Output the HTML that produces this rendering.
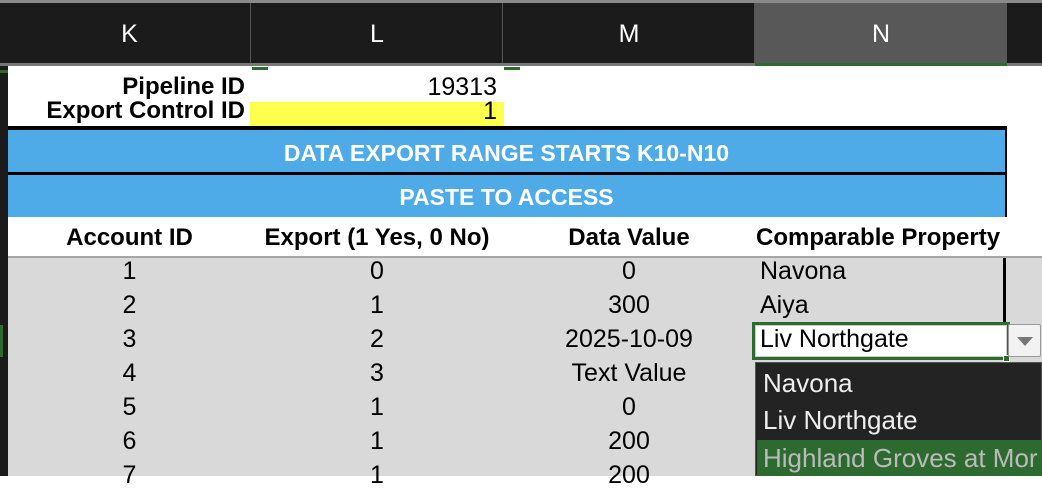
<!DOCTYPE html>
<html><head><meta charset="utf-8"><style>
*{margin:0;padding:0;box-sizing:border-box}
body{width:1042px;height:476px;overflow:hidden;background:#fff;position:relative;font-family:"Liberation Sans",sans-serif}
.a{position:absolute}
.t{position:absolute;font-size:25px;color:#000;white-space:nowrap;line-height:28px}
.c{text-align:center}
.b{font-weight:bold;font-size:24px}
</style></head><body>
<!-- header -->
<div class="a" style="left:0;top:0;width:1042px;height:66px;background:#1b1b1b;border-top:3px solid #8a8a8a"></div>
<div class="a" style="left:755px;top:3px;width:252px;height:63px;background:#585858"></div>
<div class="a" style="left:0;top:63px;width:1042px;height:3px;background:#777"></div>
<div class="a" style="left:755px;top:63px;width:252px;height:3px;background:#2e6b30"></div>
<div class="a" style="left:250px;top:3px;width:1px;height:60px;background:#555"></div>
<div class="a" style="left:502px;top:3px;width:1px;height:60px;background:#555"></div>
<div class="a" style="left:754px;top:3px;width:1px;height:60px;background:#555"></div>
<div class="a" style="left:1006px;top:3px;width:1px;height:60px;background:#555"></div>
<div class="t c" style="left:8px;width:243px;top:20px;color:#fff;font-size:25px">K</div>
<div class="t c" style="left:251px;width:252px;top:20px;color:#fff;font-size:25px">L</div>
<div class="t c" style="left:503px;width:252px;top:20px;color:#fff;font-size:25px">M</div>
<div class="t c" style="left:755px;width:252px;top:20px;color:#fff;font-size:25px">N</div>
<!-- left strip -->
<div class="a" style="left:0;top:66px;width:8px;height:410px;background:#1b1b1b"></div>
<div class="a" style="left:0;top:70px;width:8px;height:3px;background:#2e6b30"></div>
<div class="a" style="left:0;top:325px;width:3px;height:32px;background:#2e6b30"></div>
<!-- top rows -->
<div class="a" style="left:8px;top:72px;width:500px;height:54px;overflow:hidden">
<div class="t b" style="left:0;width:237px;text-align:right;top:1px">Pipeline ID</div>
<div class="t" style="left:243px;width:246px;text-align:right;top:1px">19313</div>
<div class="a" style="left:242px;top:30px;width:254px;height:24px;background:#ffff4e"></div>
<div class="t b" style="left:0;width:237px;text-align:right;top:25px">Export Control ID</div>
<div class="t" style="left:243px;width:246px;text-align:right;top:25px">1</div>
</div>
<div class="a" style="left:252px;top:67px;width:16px;height:3px;background:#2e6b30"></div>
<div class="a" style="left:504px;top:67px;width:16px;height:3px;background:#2e6b30"></div>
<!-- blue bands -->
<div class="a" style="left:8px;top:126px;width:999px;height:92px;background:#000"></div>
<div class="a" style="left:8px;top:130px;width:997px;height:42px;background:#4eabe8"></div>
<div class="a" style="left:8px;top:175px;width:997px;height:42px;background:#4eabe8"></div>
<div class="t c b" style="left:8px;width:997px;top:139px;color:#fff;font-size:23px">DATA EXPORT RANGE STARTS K10-N10</div>
<div class="t c b" style="left:8px;width:997px;top:183px;color:#fff;font-size:23px">PASTE TO ACCESS</div>
<!-- column header row -->
<div class="a" style="left:8px;top:217px;width:1034px;height:40px;background:#fff"></div>
<div class="t c b" style="left:8px;width:243px;top:224px">Account ID</div>
<div class="t c b" style="left:251px;width:252px;top:224px">Export (1 Yes, 0 No)</div>
<div class="t c b" style="left:503px;width:252px;top:224px">Data Value</div>
<div class="t b" style="left:756px;top:224px">Comparable Property</div>
<!-- data -->
<div class="a" style="left:8px;top:256px;width:1034px;height:220px;background:#d9d9d9;border-top:2px solid #a6a6a6"></div>
<div class="a" style="left:1003px;top:258px;width:3px;height:65px;background:#000"></div>
<div class="t c" style="left:8px;width:243px;top:257px">1</div><div class="t c" style="left:251px;width:252px;top:257px">0</div><div class="t c" style="left:503px;width:252px;top:257px">0</div><div class="t" style="left:760px;top:257px">Navona</div>
<div class="t c" style="left:8px;width:243px;top:291px">2</div><div class="t c" style="left:251px;width:252px;top:291px">1</div><div class="t c" style="left:503px;width:252px;top:291px">300</div><div class="t" style="left:760px;top:291px">Aiya</div>
<div class="t c" style="left:8px;width:243px;top:325px">3</div><div class="t c" style="left:251px;width:252px;top:325px">2</div><div class="t c" style="left:503px;width:252px;top:325px">2025-10-09</div>
<div class="t c" style="left:8px;width:243px;top:359px">4</div><div class="t c" style="left:251px;width:252px;top:359px">3</div><div class="t c" style="left:503px;width:252px;top:359px">Text Value</div>
<div class="t c" style="left:8px;width:243px;top:393px">5</div><div class="t c" style="left:251px;width:252px;top:393px">1</div><div class="t c" style="left:503px;width:252px;top:393px">0</div>
<div class="t c" style="left:8px;width:243px;top:427px">6</div><div class="t c" style="left:251px;width:252px;top:427px">1</div><div class="t c" style="left:503px;width:252px;top:427px">200</div>
<div class="t c" style="left:8px;width:243px;top:461px">7</div><div class="t c" style="left:251px;width:252px;top:461px">1</div><div class="t c" style="left:503px;width:252px;top:461px">200</div>
<!-- selected cell -->
<div class="a" style="left:752px;top:322px;width:258px;height:38px;border:3px solid #2e6b30;background:#fff"><div style="position:absolute;inset:0;border:1px solid #ccc"></div></div>
<div class="t" style="left:760px;top:325px">Liv Northgate</div>
<div class="a" style="left:1003px;top:355px;width:7px;height:7px;background:#2e6b30;border:1px solid #fff"></div>
<div class="a" style="left:1008px;top:324px;width:33px;height:33px;background:#f2f2f2;border:1px solid #999;border-radius:2px"></div>
<div class="a" style="left:1017px;top:337px;width:0;height:0;border-left:8px solid transparent;border-right:8px solid transparent;border-top:9px solid #777"></div>
<!-- dropdown -->
<div class="a" style="left:755px;top:362px;width:287px;height:114px;background:#232323;border:1px solid #555"></div>
<div class="t" style="left:763px;top:368px;color:#eee;font-size:26px;line-height:30px">Navona</div>
<div class="t" style="left:763px;top:405px;color:#eee;font-size:26px;line-height:30px">Liv Northgate</div>
<div class="a" style="left:757px;top:440px;width:285px;height:36px;background:#2d6a2f"></div>
<div class="t" style="left:763px;top:443px;color:#bbb;font-size:26px;line-height:30px">Highland Groves at Mor</div>
</body></html>
